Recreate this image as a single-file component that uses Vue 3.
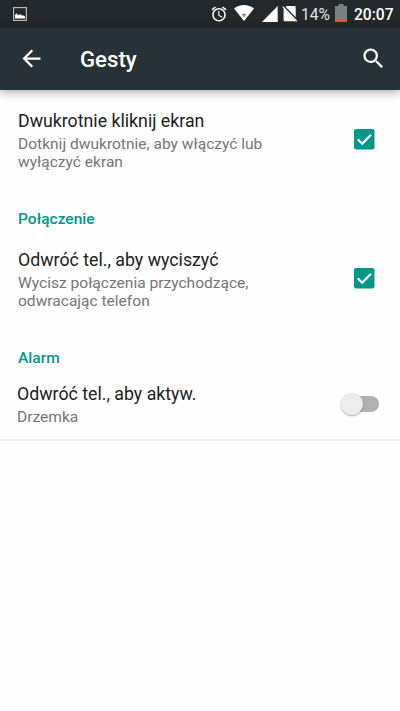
<script setup>
import { reactive } from 'vue'

const sections = reactive([
  {
    items: [
      { title: 'Dwukrotnie kliknij ekran', summary: 'Dotknij dwukrotnie, aby włączyć lub wyłączyć ekran', type: 'checkbox', on: true },
    ],
  },
  {
    header: 'Połączenie',
    items: [
      { title: 'Odwróć tel., aby wyciszyć', summary: 'Wycisz połączenia przychodzące, odwracając telefon', type: 'checkbox', on: true },
    ],
  },
  {
    header: 'Alarm',
    items: [
      { title: 'Odwróć tel., aby aktyw.', summary: 'Drzemka', type: 'switch', on: false },
    ],
  },
])
</script>

<template>
  <div class="screen">
    <div class="status">
      <svg class="photo" width="14" height="14" viewBox="0 0 14 14">
        <rect x="0.6" y="0.6" width="12.8" height="12.8" fill="none" stroke="#b4b7b8" stroke-width="1.2" />
        <path d="M2 11.600V8L3.600 6.300 5.500 8.300 7.600 7.200 9.200 8.800l1-.6L12 9.400v2.200z" fill="#fff" />
      </svg>
      <div class="tray">
        <svg class="alarm" width="18" height="18" viewBox="0 0 24 24" fill="#fff">
          <path d="M22 5.720l-4.600-3.860-1.290 1.530 4.600 3.860L22 5.720zM7.880 3.390L6.600 1.860 2 5.710l1.290 1.530 4.590-3.850zM12.500 8H11v6l4.750 2.850.75-1.230-4-2.370V8zM12 4c-4.970 0-9 4.030-9 9s4.020 9 9 9c4.970 0 9-4.030 9-9s-4.030-9-9-9zm0 16c-3.870 0-7-3.130-7-7s3.130-7 7-7 7 3.130 7 7-3.130 7-7 7z" />
        </svg>
        <svg class="wifi" width="20" height="16" viewBox="0 0 20 16">
          <path d="M0 3.600C5.500-1.200 14.500-1.200 20 3.600L10 16z" fill="#fff" />
          <path d="M7.600 9.200Q10 8 12.400 9.200L10 12.200z" fill="#8b8e90" />
        </svg>
        <svg class="signal" width="16" height="16" viewBox="0 0 16 16">
          <path d="M15.700 0v16H0z" fill="#fff" />
        </svg>
        <svg class="sim" width="16" height="17" viewBox="0 0 16 17">
          <path d="M4.600 1H12.500q1.200 0 1.200 1.200V12.200L3.700 2zM1.600 3L14 16.300H2.800q-1.200 0-1.200-1.200z" fill="#fff" />
          <path d="M.7 1.600L14.700 16.300" stroke="#fff" stroke-width="1.300" />
        </svg>
        <span class="percent">14%</span>
        <svg class="battery" width="12" height="18" viewBox="0 0 12 18">
          <path d="M3.500 0h5v2H12v16H0V2h3.500z" fill="#7b7f80" />
          <rect y="15.800" width="12" height="2.200" fill="#f4511e" />
        </svg>
        <span class="clock">20:07</span>
      </div>
    </div>

    <header class="bar">
      <svg class="back" width="27" height="27" viewBox="0 0 24 24" fill="#fff">
        <path d="M20 11H7.830l5.590-5.590L12 4l-8 8 8 8 1.410-1.410L7.830 13H20v-2z" />
      </svg>
      <h1>Gesty</h1>
      <svg class="search" width="27" height="27" viewBox="0 0 24 24" fill="#fff">
        <path d="M15.500 14h-.79l-.28-.27A6.471 6.471 0 0 0 16 9.500 6.500 6.500 0 1 0 9.500 16c1.610 0 3.090-.59 4.230-1.570l.27.28v.79l5 4.990L20.490 19l-4.990-5zm-6 0C7.010 14 5 11.990 5 9.500S7.010 5 9.500 5 14 7.010 14 9.500 11.990 14 9.500 14z" />
      </svg>
    </header>

    <main>
      <section v-for="(section, i) in sections" :key="i">
        <h2 v-if="section.header">{{ section.header }}</h2>
        <div v-for="item in section.items" :key="item.title" class="row" :class="item.type" @click="item.on = !item.on">
          <div class="text">
            <div class="title">{{ item.title }}</div>
            <div class="summary">{{ item.summary }}</div>
          </div>
          <svg v-if="item.type === 'checkbox'" class="check" width="21" height="21" viewBox="0 0 21 21">
            <rect width="20.500" height="20.500" rx="2.200" :fill="item.on ? '#009688' : '#757575'" />
            <path v-if="item.on" d="M3.700 10.200L8.200 14.700 17 5.700" fill="none" stroke="#fff" stroke-width="2.200" />
          </svg>
          <div v-else class="toggle" :class="{ on: item.on }"><div class="thumb"></div></div>
        </div>
      </section>
    </main>
  </div>
</template>

<style>
body {
  margin: 0;
  background: #fefefe;
}
</style>

<style scoped>
.screen {
  width: 400px;
  height: 711px;
  overflow: hidden;
  background: #fefefe;
  font-family: Roboto, "Noto Sans", sans-serif;
}
.status {
  display: flex;
  justify-content: space-between;
  align-items: flex-start;
  height: 28px;
  box-sizing: border-box;
  padding: 0 7px 0 13px;
  background: #22282b;
  color: #fff;
}
svg {
  display: block;
  flex: none;
}
.photo {
  margin-top: 7px;
}
.tray {
  display: flex;
  align-items: flex-start;
}
.alarm {
  margin: 5px 6px 0 0;
}
.wifi {
  margin: 5px 8px 0 0;
}
.signal {
  margin: 6px 4px 0 0;
}
.sim {
  margin: 5px 3px 0 0;
}
.percent {
  width: 34px;
  font-size: 15.6px;
  line-height: 30px;
  color: #e4e5e5;
}
.battery {
  margin: 4px 7px 0 0;
}
.clock {
  width: 39px;
  font-size: 15.6px;
  font-weight: 500;
  line-height: 30px;
}
.bar {
  display: flex;
  align-items: center;
  height: 62px;
  box-sizing: border-box;
  padding: 0 13px 0 18px;
  background: #263238;
  box-shadow: 0 2px 9px rgba(0, 0, 0, 0.36);
  color: #fff;
}
.search {
  margin-top: -2px;
}
.back {
  margin-top: -1px;
}
h1 {
  flex: 1;
  margin: 0 0 0 35px;
  font-size: 22.2px;
  font-weight: 500;
  line-height: 28px;
}
main {
  padding-top: 10px;
}
.row {
  display: flex;
  justify-content: space-between;
  align-items: center;
  height: 79px;
  box-sizing: border-box;
  padding: 0 25px 0 18px;
}
.row.switch {
  height: 68px;
  padding: 0 21px 5px 17px;
  border-bottom: 2px solid #f1f1f1;
}
.text {
  width: 265px;
}
.title {
  font-size: 17.75px;
  line-height: 22px;
  color: #212121;
}
.summary {
  margin-top: 2px;
  padding-top: 1px;
  margin-bottom: -1px;
  font-size: 15.56px;
  line-height: 18px;
  color: #757575;
}
h2 {
  margin: 0;
  padding: 20px 18px 0;
  height: 60px;
  box-sizing: border-box;
  font-size: 15.56px;
  font-weight: 500;
  line-height: 40px;
  color: #009688;
}
section:last-child h2 {
  height: 55px;
}
.toggle {
  display: flex;
  align-items: center;
  width: 33px;
  height: 16px;
  border-radius: 8px;
  background: #b1b1b1;
}
.thumb {
  width: 22px;
  height: 22px;
  flex: none;
  margin-left: -5px;
  border-radius: 50%;
  background: #ececec;
  box-shadow: 0 1px 2px rgba(0, 0, 0, 0.35);
}
.toggle.on {
  background: #80cbc4;
}
.toggle.on .thumb {
  margin-left: 16px;
  background: #009688;
}
</style>
